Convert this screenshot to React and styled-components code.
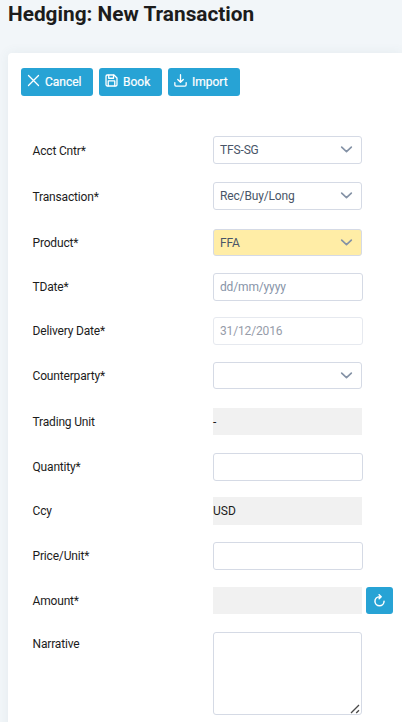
import React from "react";
import styled, { createGlobalStyle } from "styled-components";

const App = () => {
  return (
    <Page>
      <GlobalStyle />
      <Title>Hedging: New Transaction</Title>
      <Card>
        <Toolbar>
          <Button $width={72}>
            <CancelIcon />
            Cancel
          </Button>
          <Button $width={63}>
            <SaveIcon />
            Book
          </Button>
          <Button $width={72}>
            <ImportIcon />
            Import
          </Button>
        </Toolbar>
        <Row $height={28} $gap={18}>
          <Label $top={8}>Acct Cntr*</Label>
          <Select>
            TFS-SG
            <Chevron />
          </Select>
        </Row>
        <Row $height={28} $gap={19}>
          <Label $top={8}>Transaction*</Label>
          <Select>
            Rec/Buy/Long
            <Chevron />
          </Select>
        </Row>
        <Row $height={27} $gap={17}>
          <Label>Product*</Label>
          <Select $highlight>
            FFA
            <Chevron />
          </Select>
        </Row>
        <Row $height={28} $gap={16}>
          <Label>TDate*</Label>
          <Input placeholder="dd/mm/yyyy" />
        </Row>
        <Row $height={28} $gap={17}>
          <Label>Delivery Date*</Label>
          <Input defaultValue="31/12/2016" disabled />
        </Row>
        <Row $height={27} $gap={19}>
          <Label>Counterparty*</Label>
          <Select>
            <Chevron />
          </Select>
        </Row>
        <Row $height={27} $gap={18}>
          <Label>Trading Unit</Label>
          <ReadOnly>-</ReadOnly>
        </Row>
        <Row $height={28} $gap={16}>
          <Label>Quantity*</Label>
          <Input />
        </Row>
        <Row $height={28} $gap={17}>
          <Label>Ccy</Label>
          <ReadOnly>USD</ReadOnly>
        </Row>
        <Row $height={28} $gap={17}>
          <Label>Price/Unit*</Label>
          <Input />
        </Row>
        <Row $height={27} $gap={18}>
          <Label>Amount*</Label>
          <ReadOnly />
          <RefreshButton>
            <RefreshIcon />
          </RefreshButton>
        </Row>
        <Row $height={83} $gap={0}>
          <Label $top={5}>Narrative</Label>
          <NoteBox>
            <Note />
            <Grip />
          </NoteBox>
        </Row>
      </Card>
    </Page>
  );
};

const CancelIcon = () => (
  <Icon viewBox="0 0 14 14">
    <path d="M1.6 1.6l10.8 10.8M12.4 1.6L1.6 12.4" />
  </Icon>
);

const SaveIcon = () => (
  <Icon viewBox="0 0 14 14">
    <path d="M2.3 1.1h7.4l3.2 3.2v7.4a1.2 1.2 0 0 1-1.2 1.2H2.3a1.2 1.2 0 0 1-1.2-1.2V2.3a1.2 1.2 0 0 1 1.2-1.2z" />
    <path d="M4 1.3v3.3h5.2V1.3M3.5 12.7V7.5h7v5.2" />
  </Icon>
);

const ImportIcon = () => (
  <Icon viewBox="0 0 14 14">
    <path d="M7 .8v8M4 5.9l3 3 3-3M.9 9.2v2.4c0 .9.5 1.4 1.3 1.4h9.6c.8 0 1.3-.5 1.3-1.4V9.2" />
  </Icon>
);

const RefreshIcon = () => (
  <RefreshSvg viewBox="0 0 14 14">
    <path d="M8.4 2.9H7a4.9 4.9 0 1 0 4.9 4.9M6.6.8l2.2 2.1L6.6 5.1" />
  </RefreshSvg>
);

const Chevron = () => (
  <ChevronSvg viewBox="0 0 14 14">
    <path d="M1.8 4.4L7 9.2l5.2-4.8" />
  </ChevronSvg>
);

const Grip = () => (
  <GripSvg viewBox="0 0 10 10">
    <path d="M1 9l8-8M6.2 9L9 6.2" />
  </GripSvg>
);

const GlobalStyle = createGlobalStyle`
  * {
    box-sizing: border-box;
  }
  body {
    margin: 0;
    overflow: hidden;
    background: #f2f6f9;
    font-family: Roboto, "Liberation Sans", sans-serif;
    font-size: 12px;
    color: #1c1c1c;
  }
  input, button, textarea {
    font: inherit;
  }
`;

const Page = styled.div`
  height: 722px;
  padding-left: 8px;
  overflow: hidden;
`;

const Title = styled.h1`
  height: 53px;
  margin: 0;
  padding-top: 2px;
  font-size: 20.8px;
  line-height: 24px;
  font-weight: 700;
  white-space: nowrap;
`;

const Card = styled.div`
  height: 680px;
  padding: 15px 0 0 13px;
  border-radius: 4px 0 0 0;
  background: #fff;
  box-shadow: 0 0 12px rgba(70, 100, 120, 0.08);
`;

const Toolbar = styled.div`
  display: flex;
  gap: 6px;
  margin-bottom: 40px;
`;

const Button = styled.button`
  display: flex;
  align-items: center;
  gap: 5px;
  width: ${(props) => props.$width}px;
  height: 28px;
  padding: 0 0 0 6px;
  border: 0;
  border-radius: 3px;
  background: #27a3d5;
  color: #fff;
  -webkit-text-stroke: 0.2px #fff;
`;

const Icon = styled.svg`
  flex: none;
  width: 13px;
  height: 13px;
  margin-bottom: 3px;
  fill: none;
  stroke: #fff;
  stroke-width: 1.4;
  stroke-linecap: round;
  stroke-linejoin: round;
`;

const Row = styled.div`
  display: flex;
  height: ${(props) => props.$height}px;
  margin-bottom: ${(props) => props.$gap}px;
  padding-left: 11.5px;
`;

const Label = styled.label`
  flex: none;
  width: 180.5px;
  padding-top: ${(props) => props.$top || 7}px;
  line-height: 15px;
  letter-spacing: -0.17px;
`;

const Select = styled.div`
  display: flex;
  align-items: center;
  width: 149px;
  padding: 0 8px 0 6px;
  border: 1px solid #d5dae5;
  border-radius: 3px;
  background: ${(props) => (props.$highlight ? "#ffeda6" : "#fff")};
  color: #495568;
  letter-spacing: -0.15px;
`;

const ChevronSvg = styled.svg`
  width: 13px;
  height: 13px;
  margin-left: auto;
  margin-bottom: 1px;
  fill: none;
  stroke: #8492a6;
  stroke-width: 1.8;
  stroke-linecap: round;
  stroke-linejoin: round;
`;

const Input = styled.input`
  width: 150px;
  padding: 0 6px;
  border: 1px solid #d5dae5;
  border-radius: 3px;
  outline: none;
  background: #fff;
  color: #495568;
  letter-spacing: -0.15px;

  &::placeholder {
    color: #8794a8;
  }
  &:disabled {
    border-color: #e6e9ef;
    color: #969ca9;
  }
`;

const ReadOnly = styled.div`
  width: 149px;
  padding-top: 7px;
  line-height: 15px;
  background: #f1f1f1;
`;

const RefreshButton = styled.button`
  display: flex;
  align-items: center;
  justify-content: center;
  width: 27px;
  margin-left: 4px;
  padding: 0;
  border: 0;
  border-radius: 3px;
  background: #27a3d5;
`;

const RefreshSvg = styled(Icon)`
  margin-bottom: 0;
  stroke-width: 1.6;
`;

const NoteBox = styled.div`
  position: relative;
  width: 149px;
`;

const Note = styled.textarea`
  display: block;
  width: 100%;
  height: 100%;
  border: 1px solid #d5dae5;
  border-radius: 3px;
  outline: none;
  resize: none;
`;

const GripSvg = styled.svg`
  position: absolute;
  right: 2px;
  bottom: 1px;
  width: 10px;
  height: 10px;
  fill: none;
  stroke: #4a4a4a;
  stroke-width: 1.3;
`;

export default App;
